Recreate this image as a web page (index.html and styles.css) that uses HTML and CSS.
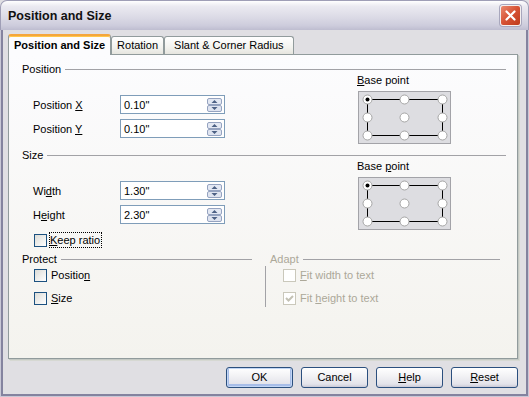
FILE: index.html
```html
<!DOCTYPE html>
<html lang="en">
<head>
    <meta charset="UTF-8">
    <title>Position and Size</title>
    <link rel="stylesheet" href="styles.css">
</head>
<body>
    <div class="window">
        <div class="titlebar">
            <span class="title">Position and Size</span>
            <span class="close">
                <svg width="21" height="21" viewBox="0 0 21 21">
                    <path d="M6.5 6.5 L14.5 14.5 M14.5 6.5 L6.5 14.5" stroke="#fff" stroke-width="2.2" stroke-linecap="round"/>
                </svg>
            </span>
        </div>

        <div class="dialog">
            <!-- Tabs -->
            <div class="tabs">
                <div class="tab active">Position and Size</div>
                <div class="tab">Rotation</div>
                <div class="tab wide">Slant &amp; Corner Radius</div>
            </div>

            <div class="page">
                <!-- Position -->
                <div class="group">
                    <div class="group-head">Position</div>
                    <div class="group-body">
                        <div class="fields">
                            <div class="field">
                                <span class="field-label">Position <u>X</u></span>
                                <div class="spinfield">0.10"
                                    <svg class="spin" width="15" height="14" viewBox="0 0 15 14"><rect x="0.5" y="0.5" width="14" height="6" rx="1.5" fill="#e3e8f3" stroke="#95a3c0"/><rect x="0.5" y="7.5" width="14" height="6" rx="1.5" fill="#dfe4f0" stroke="#95a3c0"/><path d="M4.5 5 L7.5 2 L10.5 5Z M4.5 9 L7.5 12 L10.5 9Z" fill="#4d6185"/></svg>
                                </div>
                            </div>
                            <div class="field">
                                <span class="field-label">Position <u>Y</u></span>
                                <div class="spinfield">0.10"
                                    <svg class="spin" width="15" height="14" viewBox="0 0 15 14"><rect x="0.5" y="0.5" width="14" height="6" rx="1.5" fill="#e3e8f3" stroke="#95a3c0"/><rect x="0.5" y="7.5" width="14" height="6" rx="1.5" fill="#dfe4f0" stroke="#95a3c0"/><path d="M4.5 5 L7.5 2 L10.5 5Z M4.5 9 L7.5 12 L10.5 9Z" fill="#4d6185"/></svg>
                                </div>
                            </div>
                        </div>
                        <div class="basepoint">
                            <span class="bp-label"><u>B</u>ase point</span>
                            <svg class="bp-box" width="93" height="53" viewBox="0 0 93 53">
                                <rect x="0.5" y="0.5" width="92" height="52" fill="#dddde1" stroke="#a3a3a8"/>
                                <path d="M9 8.5 H84 M9 44.5 H84 M9.5 8 V44 M84.5 8 V44" stroke="#000"/>
                                <g fill="#fff" stroke="#a5a5a5">
                                    <circle cx="9.5" cy="8.5" r="4.5"/><circle cx="46.5" cy="8.5" r="4.5"/><circle cx="84.5" cy="8.5" r="4.5"/>
                                    <circle cx="9.5" cy="26.5" r="4.5"/><circle cx="46.5" cy="26.5" r="4.5"/><circle cx="84.5" cy="26.5" r="4.5"/>
                                    <circle cx="9.5" cy="44.5" r="4.5"/><circle cx="46.5" cy="44.5" r="4.5"/><circle cx="84.5" cy="44.5" r="4.5"/>
                                </g>
                                <circle cx="9.5" cy="8.5" r="2" fill="#000"/>
                            </svg>
                        </div>
                    </div>
                </div>

                <!-- Size -->
                <div class="group">
                    <div class="group-head">Size</div>
                    <div class="group-body">
                        <div class="fields">
                            <div class="field">
                                <span class="field-label">Wi<u>d</u>th</span>
                                <div class="spinfield">1.30"
                                    <svg class="spin" width="15" height="14" viewBox="0 0 15 14"><rect x="0.5" y="0.5" width="14" height="6" rx="1.5" fill="#e3e8f3" stroke="#95a3c0"/><rect x="0.5" y="7.5" width="14" height="6" rx="1.5" fill="#dfe4f0" stroke="#95a3c0"/><path d="M4.5 5 L7.5 2 L10.5 5Z M4.5 9 L7.5 12 L10.5 9Z" fill="#4d6185"/></svg>
                                </div>
                            </div>
                            <div class="field">
                                <span class="field-label">H<u>e</u>ight</span>
                                <div class="spinfield">2.30"
                                    <svg class="spin" width="15" height="14" viewBox="0 0 15 14"><rect x="0.5" y="0.5" width="14" height="6" rx="1.5" fill="#e3e8f3" stroke="#95a3c0"/><rect x="0.5" y="7.5" width="14" height="6" rx="1.5" fill="#dfe4f0" stroke="#95a3c0"/><path d="M4.5 5 L7.5 2 L10.5 5Z M4.5 9 L7.5 12 L10.5 9Z" fill="#4d6185"/></svg>
                                </div>
                            </div>
                            <div class="check keep">
                                <span class="box"></span>
                                <span class="focus"><u>K</u>eep ratio</span>
                            </div>
                        </div>
                        <div class="basepoint">
                            <span class="bp-label">Base <u>p</u>oint</span>
                            <svg class="bp-box" width="93" height="53" viewBox="0 0 93 53">
                                <rect x="0.5" y="0.5" width="92" height="52" fill="#dddde1" stroke="#a3a3a8"/>
                                <path d="M9 8.5 H84 M9 44.5 H84 M9.5 8 V44 M84.5 8 V44" stroke="#000"/>
                                <g fill="#fff" stroke="#a5a5a5">
                                    <circle cx="9.5" cy="8.5" r="4.5"/><circle cx="46.5" cy="8.5" r="4.5"/><circle cx="84.5" cy="8.5" r="4.5"/>
                                    <circle cx="9.5" cy="26.5" r="4.5"/><circle cx="46.5" cy="26.5" r="4.5"/><circle cx="84.5" cy="26.5" r="4.5"/>
                                    <circle cx="9.5" cy="44.5" r="4.5"/><circle cx="46.5" cy="44.5" r="4.5"/><circle cx="84.5" cy="44.5" r="4.5"/>
                                </g>
                                <circle cx="9.5" cy="8.5" r="2" fill="#000"/>
                            </svg>
                        </div>
                    </div>
                </div>

                <!-- Protect / Adapt -->
                <div class="bottom-groups">
                    <div class="protect">
                        <div class="group-head">Protect</div>
                        <div class="checks">
                            <div class="check"><span class="box"></span><span>Positio<u>n</u></span></div>
                            <div class="check"><span class="box"></span><span><u>S</u>ize</span></div>
                        </div>
                    </div>
                    <div class="adapt">
                        <div class="group-head">Adapt</div>
                        <div class="checks">
                            <div class="check"><span class="box"></span><span><u>F</u>it width to text</span></div>
                            <div class="check">
                                <span class="box">
                                    <svg width="11" height="11" viewBox="0 0 11 11"><path d="M2 5 L4.5 7.5 L9 3" fill="none" stroke="#c3c1b4" stroke-width="2"/></svg>
                                </span>
                                <span>Fit <u>h</u>eight to text</span>
                            </div>
                        </div>
                    </div>
                </div>
            </div>

            <div class="buttons">
                <div class="btn default">OK</div>
                <div class="btn">Cancel</div>
                <div class="btn"><u>H</u>elp</div>
                <div class="btn"><u>R</u>eset</div>
            </div>
        </div>
    </div>
</body>
</html>
```

FILE: styles.css
```css
body {
    margin: 0;
    font-family: "Liberation Sans", Arial, sans-serif;
    font-size: 11px;
    color: #000;
    background-color: #e0dfe3;
}
u {
    text-decoration-thickness: 1px;
    text-underline-offset: 1px;
}
.window {
    width: 529px;
    height: 397px;
    display: flex;
    flex-direction: column;
    overflow: hidden;
}

/* title bar */
.titlebar {
    height: 30px;
    box-sizing: border-box;
    display: flex;
    align-items: center;
    justify-content: space-between;
    padding: 0 7px 0 7px;
    border: 1px solid #9f9eb6;
    border-bottom: 0;
    border-radius: 7px 7px 0 0;
    background: linear-gradient(#ffffff 0%, #ebeaf1 18%, #dcdbe6 55%, #cdccdc 85%, #bebdd0 100%);
}
.title {
    font-size: 12.5px;
    font-weight: bold;
    color: #111;
}
.close {
    width: 21px;
    height: 21px;
    box-sizing: border-box;
    border: 1px solid #f4efee;
    border-radius: 3px;
    background: linear-gradient(135deg, #ea8a6f, #d65133 50%, #bf3a1c);
    box-shadow: 0 0 0 1px #a8a7bd;
    display: flex;
}
.close svg {
    margin: -1px;
}

/* dialog body */
.dialog {
    flex: 1;
    border: 1px solid #c9c8d6;
    border-top: 0;
    box-shadow: inset 2px 0 0 #84839f, inset -2px 0 0 #84839f, inset 0 -2px 0 #84839f;
    padding: 4px 10px 0 7px;
    display: flex;
    flex-direction: column;
}
.tabs {
    display: flex;
    align-items: flex-end;
    height: 20px;
}
.tab {
    height: 17px;
    line-height: 16px;
    padding: 0 5px;
    border: 1px solid #919b9c;
    border-bottom: 0;
    border-radius: 3px 3px 0 0;
    background: linear-gradient(#ffffff, #f3f3ef 60%, #e6e5df);
    white-space: nowrap;
}
.tab.wide {
    padding: 0 9px;
}
.tab.active {
    position: relative;
    z-index: 1;
    height: 19px;
    line-height: 18px;
    margin-bottom: -1px;
    font-weight: bold;
    border-top: 2px solid #f4a63c;
    box-shadow: inset 0 1px 0 #ffc84a;
    background: #fcfcfe;
}

/* tab page */
.page {
    height: 305px;
    box-sizing: border-box;
    border: 1px solid #919b9c;
    box-shadow: 1px 1px 0 #c3c8c3, 2px 2px 0 #d6d8d2;
    background: linear-gradient(#fcfcfe, #f4f3ee);
    padding: 8px 11px 0 13px;
    display: flex;
    flex-direction: column;
}
.group + .group {
    margin-top: 5px;
}
.group-head {
    display: flex;
    align-items: center;
    gap: 4px;
    height: 13px;
    line-height: 13px;
}
.group-head::after {
    content: '';
    flex: 1;
    border-top: 1px solid #a2a2a6;
}
.group-body {
    display: grid;
    grid-template-columns: 1fr 149px;
}
.fields {
    padding: 19px 0 0 11px;
    display: flex;
    flex-direction: column;
    gap: 5px;
}
.field {
    display: flex;
    align-items: center;
    height: 19px;
}
.field-label {
    width: 87px;
}
.spinfield {
    width: 105px;
    height: 19px;
    box-sizing: border-box;
    border: 1px solid #7f9db9;
    background: #fff;
    padding: 0 2px 0 3px;
    display: flex;
    align-items: center;
    justify-content: space-between;
}
.spin {
    display: block;
}
.basepoint {
    display: flex;
    flex-direction: column;
    align-items: flex-start;
}
.bp-label {
    margin-top: -2px;
    line-height: 13px;
}
.bp-box {
    display: block;
    margin: 4px 0 0 1px;
}

/* checkboxes */
.check {
    display: flex;
    align-items: center;
    gap: 4px;
    height: 13px;
    line-height: 13px;
}
.check.keep {
    margin: 4px 0 0 1px;
    height: 14px;
}
.box {
    width: 13px;
    height: 13px;
    box-sizing: border-box;
    border: 1px solid #1c5180;
    background: linear-gradient(135deg, #dcdcd7, #ffffff);
    display: flex;
    align-items: center;
    justify-content: center;
}
.focus {
    outline: 1px dotted #000;
    padding: 0 1px 0 0;
    margin-left: -1px;
    line-height: 14px;
}
.bottom-groups {
    margin-top: 6px;
    display: grid;
    grid-template-columns: 230px 235px;
    column-gap: 13px;
}
.checks {
    display: flex;
    flex-direction: column;
    gap: 10px;
    padding: 3px 0 0 12px;
}
.adapt {
    color: #aca899;
}
.adapt .group-head {
    padding-left: 5px;
}
.adapt .checks {
    border-left: 1px solid #a2a2a6;
    height: 41px;
    box-sizing: border-box;
    padding-left: 17px;
}
.adapt .box {
    border-color: #cac8bb;
    background: #fff;
}

/* buttons */
.buttons {
    display: flex;
    justify-content: flex-end;
    gap: 8px;
    margin-top: 8px;
}
.btn {
    width: 67px;
    height: 21px;
    box-sizing: border-box;
    border: 1px solid #2b4f7e;
    border-radius: 3px;
    background: linear-gradient(#ffffff, #f1f1f4 45%, #e3e3ea 85%, #c9c9d6);
    text-align: center;
    line-height: 19px;
}
.btn.default {
    box-shadow: inset 0 0 0 1px #c2d6f5, inset 0 -1px 0 2px #a7bde8;
}
```
